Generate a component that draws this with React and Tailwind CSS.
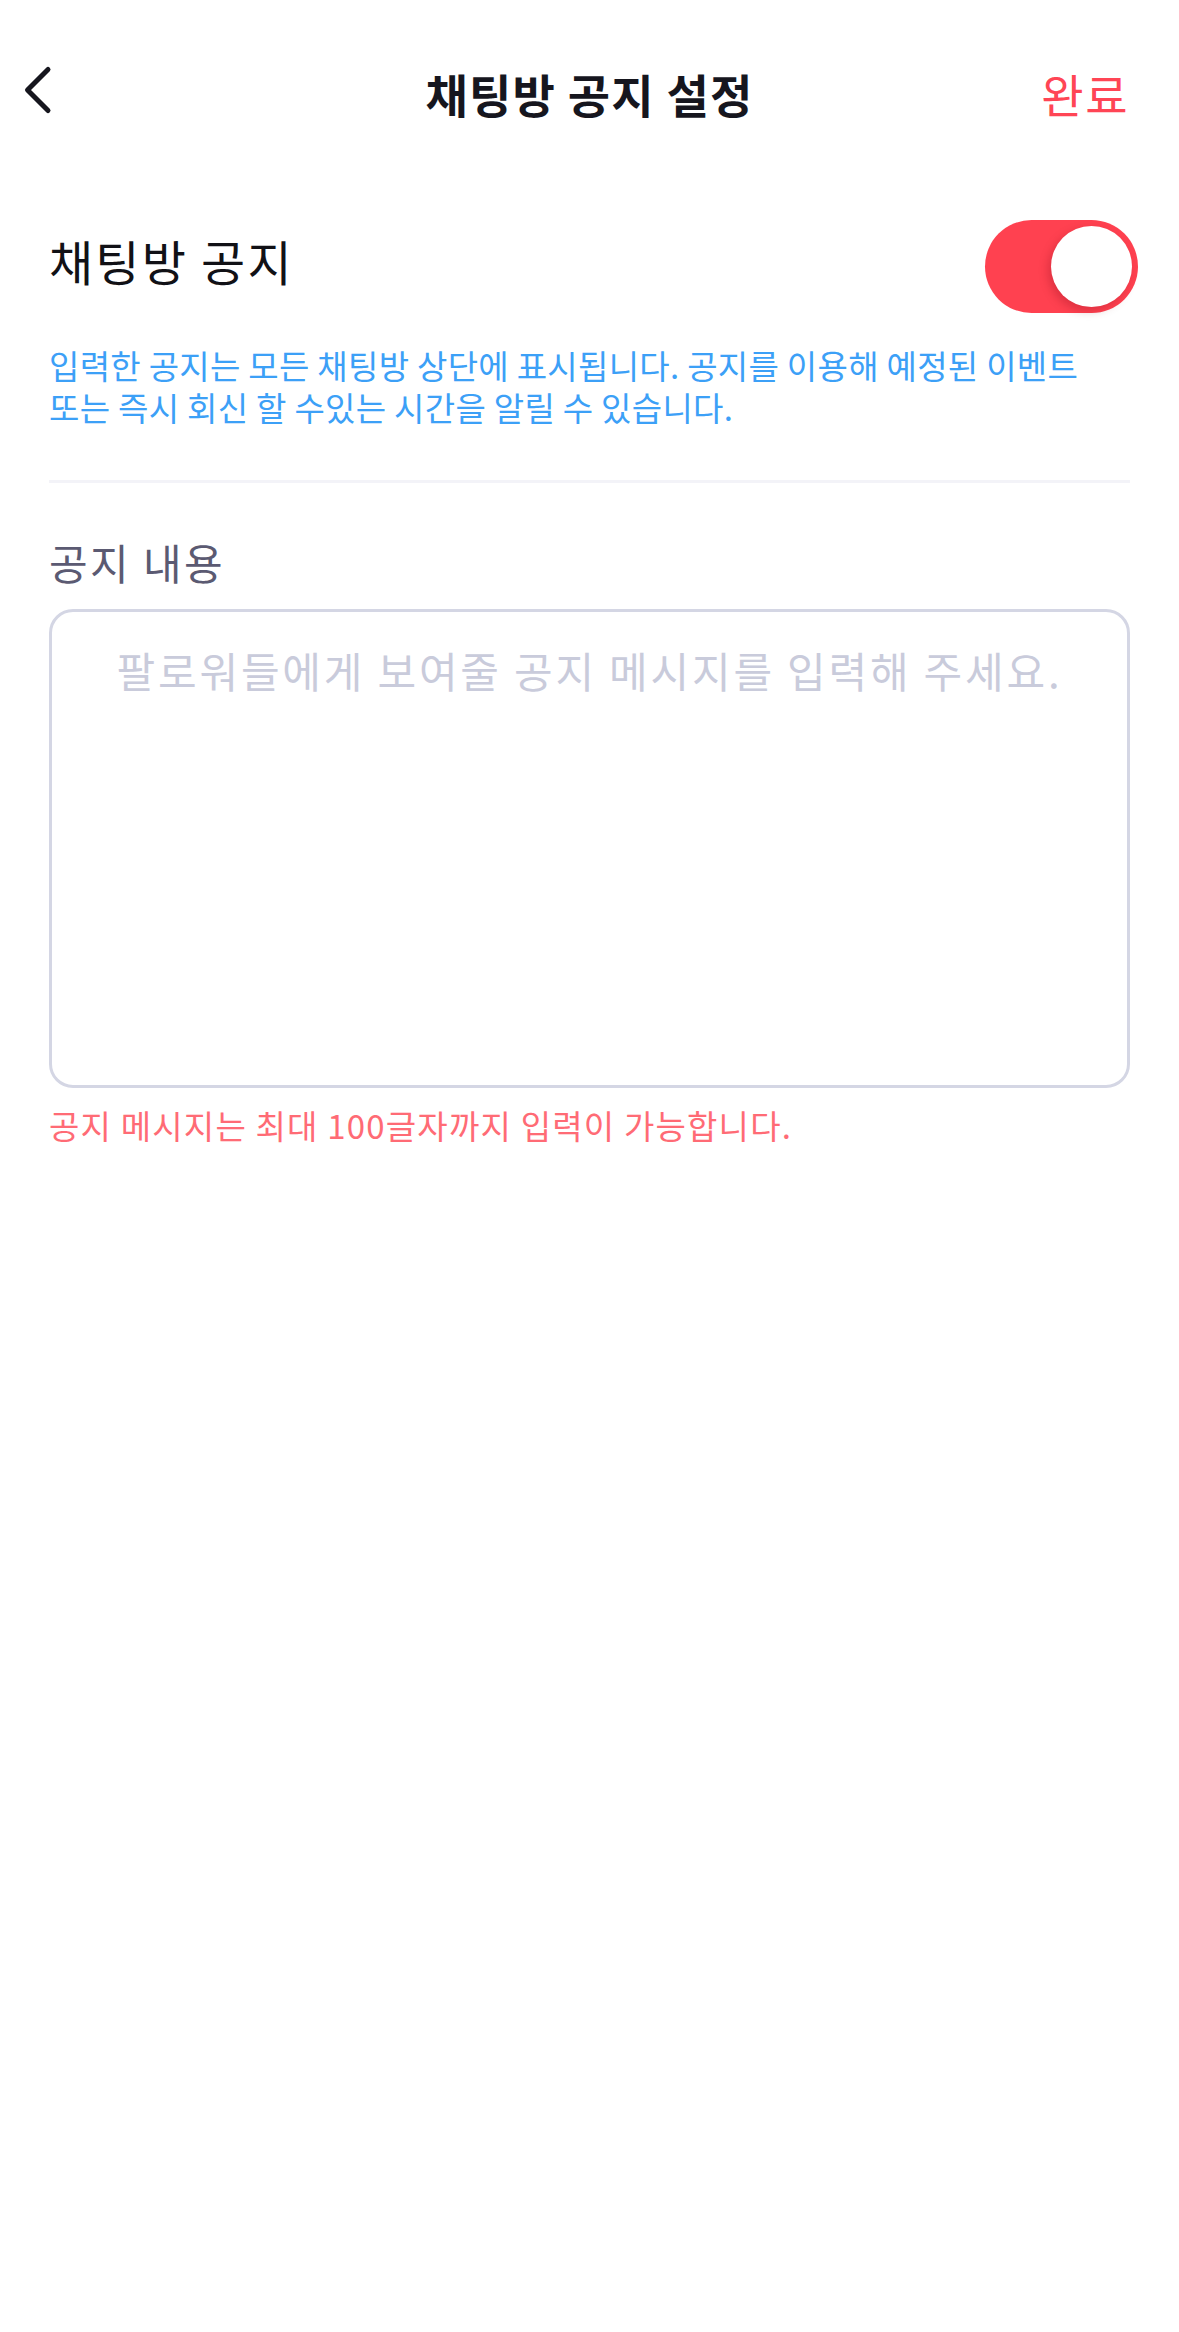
import React, { useState } from "react";

export default function App() {
  const [on, setOn] = useState(true);
  const font = { fontFamily: '"Noto Sans CJK KR", "Noto Sans", sans-serif' };
  return (
    <div className="w-[1179px] min-h-[2332px] bg-white" style={font}>
      <header className="grid grid-cols-[1fr_auto_1fr] items-center h-[186px]">
        <div className="pl-[20px] mb-[6px]">
          <svg width="40" height="60" viewBox="0 0 40 60" fill="none">
            <path d="M28 9.5 L7.5 30 L28 50.5" stroke="#16161e" strokeWidth="5" strokeLinecap="round" strokeLinejoin="round" />
          </svg>
        </div>
        <h1 className="text-[46px] leading-[56px] font-bold text-[#16161e] tracking-[1.2px]">채팅방 공지 설정</h1>
        <div className="flex justify-end pr-[50px]">
          <button className="text-[46px] leading-[56px] text-[#ff4555] tracking-[1.5px]">완료</button>
        </div>
      </header>

      <main className="px-[49px]">
        <div className="flex items-center justify-between mt-[34px] h-[93px]">
          <span className="text-[48px] leading-[56px] text-[#111116] tracking-[2.2px] mb-[14px]">채팅방 공지</span>
          <button
            onClick={() => setOn(!on)}
            className="-mr-[8px] w-[153px] h-[93px] rounded-full bg-[#ff4150] flex items-center justify-end px-[6px]"
          >
            <span className="block w-[81px] h-[81px] rounded-full bg-white shadow-[-3px_4px_10px_rgba(120,0,20,0.25)]" />
          </button>
        </div>

        <div className="mt-[31px] text-[33px] leading-[42px] text-[#3ca0f7] tracking-[0.3px] whitespace-nowrap">
          <p>입력한 공지는 모든 채팅방 상단에 표시됩니다. 공지를 이용해 예정된 이벤트</p>
          <p>또는 즉시 회신 할 수있는 시간을 알릴 수 있습니다.</p>
        </div>

        <div className="mt-[52px] h-[3px] bg-[#f3f3f8]" />

        <div className="mt-[54px] text-[42px] leading-[50px] text-[#5b5a72] tracking-[2.4px]">공지 내용</div>

        <textarea
          className="mt-[22px] block w-full h-[479px] border-[3px] border-[#d4d6e4] rounded-[24px] pt-[33px] px-[20px] text-center text-[42px] leading-[50px] tracking-[2.8px] text-[#222] placeholder:text-[#c9cbdb] resize-none outline-none"
          style={font}
          placeholder="팔로워들에게 보여줄 공지 메시지를 입력해 주세요."
        />

        <p className="mt-[16px] text-[33px] leading-[42px] text-[#ff6b75] tracking-[1.2px]">
          공지 메시지는 최대 100글자까지 입력이 가능합니다.
        </p>
      </main>
    </div>
  );
}
